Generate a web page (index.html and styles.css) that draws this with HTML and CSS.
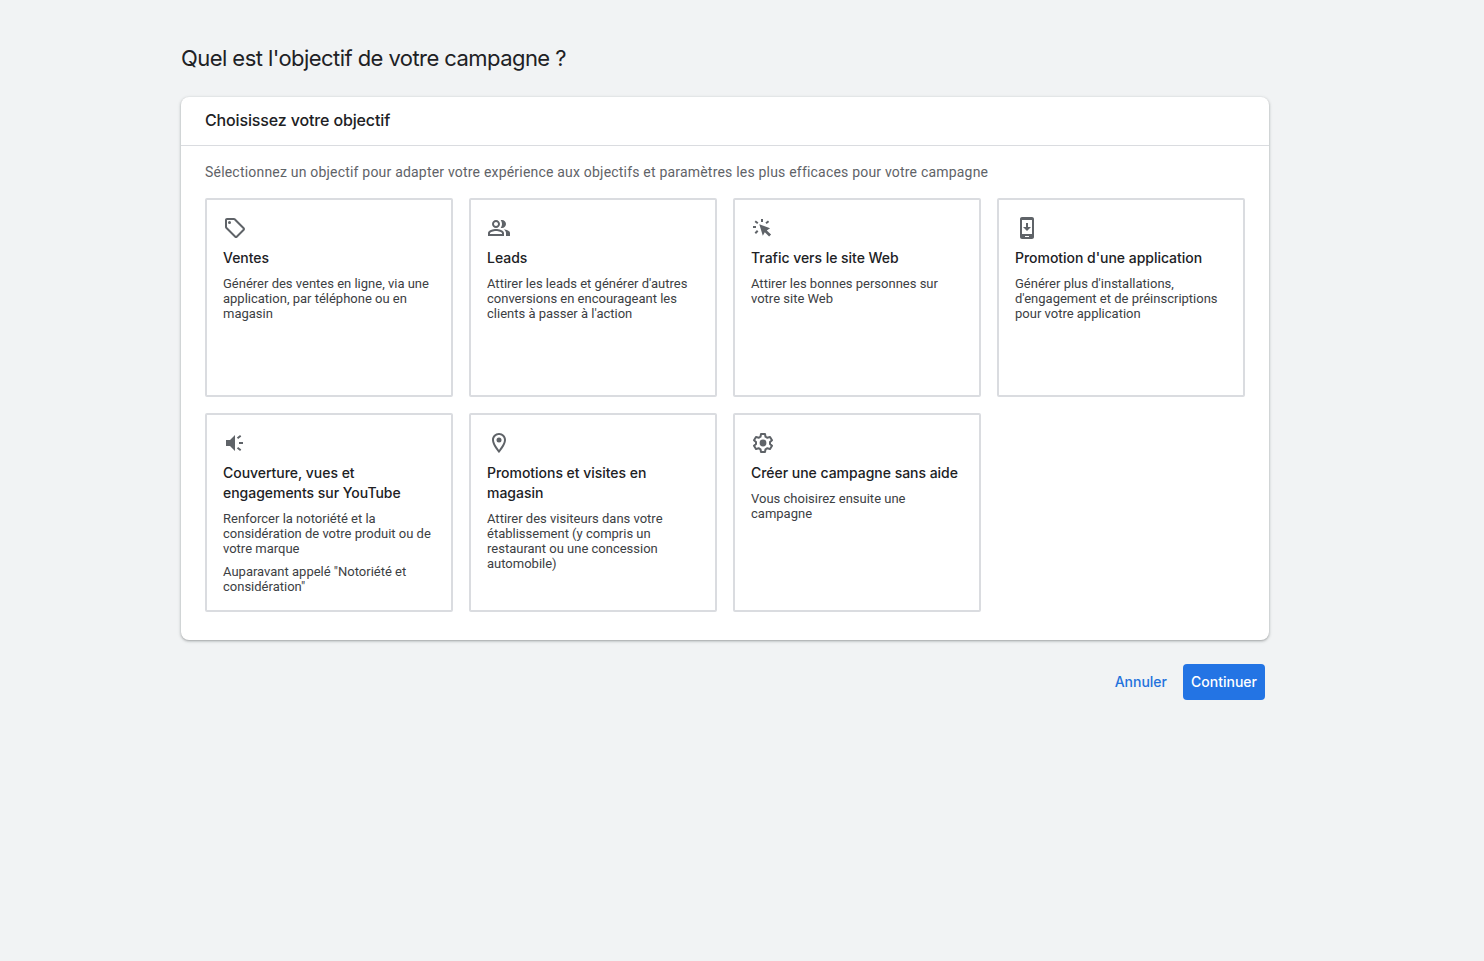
FILE: index.html
```html
<!DOCTYPE html>
<html lang="fr">
<head>
    <meta charset="UTF-8">
    <meta name="viewport" content="width=device-width, initial-scale=1.0">
    <title>Nouvelle campagne</title>
    <link rel="stylesheet" href="styles.css">
</head>
<body>
    <main class="container">
        <h1 class="page-title">Quel est l'objectif de votre campagne ?</h1>
        <section class="panel">
            <h2 class="panel-header">Choisissez votre objectif</h2>
            <div class="panel-body">
                <p class="intro">Sélectionnez un objectif pour adapter votre expérience aux objectifs et paramètres les plus efficaces pour votre campagne</p>
                <div class="goals">
                    <div class="goal">
                        <svg class="icon" viewBox="0 0 24 24"><path d="M21.41 11.58l-9-9C12.05 2.22 11.55 2 11 2H4c-1.1 0-2 .9-2 2v7c0 .55.22 1.05.59 1.42l9 9c.36.36.86.58 1.41.58s1.05-.22 1.41-.59l7-7c.37-.36.59-.86.59-1.41s-.23-1.06-.59-1.42zM13 20.01L4 11V4h7v-.01l9 9-7 7.02z"/><circle cx="6.5" cy="6.5" r="1.5"/></svg>
                        <h3>Ventes</h3>
                        <p>Générer des ventes en ligne, via une application, par téléphone ou en magasin</p>
                    </div>
                    <div class="goal">
                        <svg class="icon" viewBox="0 0 24 24"><path d="M16.67 13.13C18.04 14.06 19 15.32 19 17v3h4v-3c0-2.18-3.57-3.47-6.33-3.87zM15 12c2.21 0 4-1.79 4-4s-1.79-4-4-4c-.47 0-.91.1-1.33.24C14.5 5.27 15 6.58 15 8s-.5 2.73-1.33 3.76c.42.14.86.24 1.33.24zM9 12c2.21 0 4-1.79 4-4s-1.79-4-4-4-4 1.79-4 4 1.79 4 4 4zm0-6c1.1 0 2 .9 2 2s-.9 2-2 2-2-.9-2-2 .9-2 2-2zM9 13c-2.67 0-8 1.34-8 4v3h16v-3c0-2.66-5.33-4-8-4zm6 5H3v-.99C3.2 16.29 6.3 15 9 15s5.8 1.29 6 2v1z"/></svg>
                        <h3>Leads</h3>
                        <p>Attirer les leads et générer d'autres conversions en encourageant les clients à passer à l'action</p>
                    </div>
                    <div class="goal">
                        <svg class="icon" viewBox="0 0 24 24"><path d="M8.3 8.3l10.8 3.9-3.3 2.2 4.3 4.1-2 2-4.3-4.3-2 3.5z"/><path class="rays" d="M11 3v3M2 11h3M4.2 5.2l2.6 2M17.6 5.2l-2.6 2M4.3 17.2l2.4-2.4"/></svg>
                        <h3>Trafic vers le site Web</h3>
                        <p>Attirer les bonnes personnes sur votre site Web</p>
                    </div>
                    <div class="goal">
                        <svg class="icon" viewBox="0 0 24 24"><path d="M17 1H7C5.9 1 5 1.9 5 3v18c0 1.1.9 2 2 2h10c1.1 0 2-.9 2-2V3c0-1.1-.9-2-2-2zM17 18H7V4h10zM14 20v1h-4v-1zM16 11h-3V7h-2v4H8l4 4z" fill-rule="evenodd"/></svg>
                        <h3>Promotion d'une application</h3>
                        <p>Générer plus d'installations, d'engagement et de préinscriptions pour votre application</p>
                    </div>
                    <div class="goal">
                        <svg class="icon" viewBox="0 0 24 24"><path d="M3 9v6h4l5 5V4L7 9z"/><path class="rays" d="M16 12h4M14.5 7.2l3.2-2.4M14.5 16.8l3.2 2.4"/></svg>
                        <h3>Couverture, vues et engagements sur YouTube</h3>
                        <p>Renforcer la notoriété et la considération de votre produit ou de votre marque</p>
                        <p>Auparavant appelé "Notoriété et considération"</p>
                    </div>
                    <div class="goal">
                        <svg class="icon" viewBox="0 0 24 24"><path d="M12 2C8.13 2 5 5.13 5 9c0 5.25 7 13 7 13s7-7.75 7-13c0-3.87-3.13-7-7-7zM7 9c0-2.76 2.24-5 5-5s5 2.24 5 5c0 2.88-2.88 7.19-5 9.88C9.92 16.21 7 11.85 7 9z"/><circle cx="12" cy="9" r="2.5"/></svg>
                        <h3>Promotions et visites en magasin</h3>
                        <p>Attirer des visiteurs dans votre établissement (y compris un restaurant ou une concession automobile)</p>
                    </div>
                    <div class="goal">
                        <svg class="icon" viewBox="0 0 24 24"><path class="outline" d="M10 3h4l.5 2.7 1.9 1.1 2.6-.9 2 3.4-2 1.8v1.8l2 1.8-2 3.4-2.6-.9-1.9 1.1L14 21h-4l-.5-2.7-1.9-1.1-2.6.9-2-3.4 2-1.8v-1.8l-2-1.8 2-3.4 2.6.9 1.9-1.1z"/><circle cx="12" cy="12" r="3.4"/></svg>
                        <h3>Créer une campagne sans aide</h3>
                        <p>Vous choisirez ensuite une campagne</p>
                    </div>
                </div>
            </div>
        </section>
        <div class="actions">
            <button class="btn">Annuler</button>
            <button class="btn btn-primary">Continuer</button>
        </div>
    </main>
</body>
</html>
```
FILE: styles.css
```css
* {
    box-sizing: border-box;
}
body {
    margin: 0;
    background: #f1f3f4;
    color: #202124;
    font-family: Roboto, sans-serif;
}
h1, h2, h3, p {
    margin: 0;
}
.container {
    width: 1088px;
    margin-left: 181px;
    padding-top: 42px;
}
.page-title {
    font-family: Inter, sans-serif;
    font-size: 22px;
    font-weight: 400;
    line-height: 32px;
    letter-spacing: -0.56px;
}
.panel {
    margin-top: 23px;
    height: 543px;
    background: #fff;
    border-radius: 8px;
    box-shadow: 0 1px 2px rgba(60, 64, 67, 0.3), 0 1px 3px 1px rgba(60, 64, 67, 0.15);
}
.panel-header {
    height: 49px;
    padding: 0 24px;
    border-bottom: 1px solid #dadce0;
    font-family: Inter, sans-serif;
    font-size: 16px;
    font-weight: 500;
    line-height: 47px;
    letter-spacing: -0.14px;
}
.panel-body {
    padding: 16px 24px 28px;
}
.intro {
    color: #5f6368;
    font-size: 14px;
    line-height: 20px;
    letter-spacing: 0.2px;
}
.goals {
    display: grid;
    grid-template-columns: repeat(4, 248px);
    grid-auto-rows: 199px;
    gap: 16px;
    margin-top: 16px;
}
.goal {
    padding: 16px;
    border: 2px solid #dadce0;
    border-radius: 2px;
}
.icon {
    display: block;
    width: 24px;
    height: 24px;
    fill: #5f6368;
}
.rays, .outline {
    fill: none;
    stroke: #5f6368;
    stroke-width: 2;
}
.outline {
    stroke-linejoin: round;
}
.goal h3 {
    margin-top: 8px;
    font-family: Inter, sans-serif;
    font-size: 14px;
    font-weight: 500;
    line-height: 20px;
    letter-spacing: -0.03px;
}
.goal p {
    margin-top: 8px;
    color: #3c4043;
    font-size: 13px;
    line-height: 15px;
}
.actions {
    display: flex;
    justify-content: flex-end;
    gap: 8px;
    margin-top: 24px;
    padding-right: 4px;
}
.btn {
    height: 36px;
    padding: 0 8px 2px;
    border: none;
    border-radius: 4px;
    background: none;
    color: #2472dc;
    font-family: Inter, sans-serif;
    font-size: 14px;
    font-weight: 500;
    cursor: pointer;
}
.btn-primary {
    width: 82px;
    background: #2374e4;
    color: #fff;
}
```
